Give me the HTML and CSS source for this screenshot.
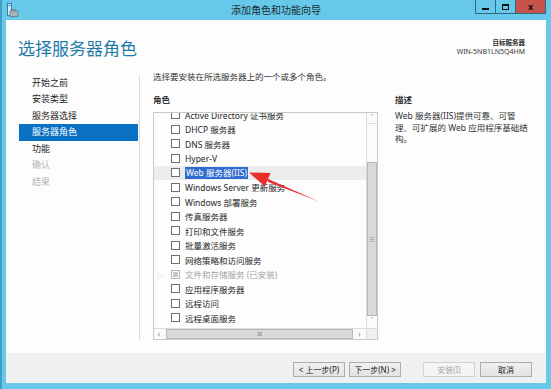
FILE: index.html
```html
<!DOCTYPE html>
<html lang="zh-CN">
<head>
<meta charset="UTF-8">
<title>添加角色和功能向导</title>
<link rel="stylesheet" href="styles.css">
</head>
<body>
    <div class="window">
        <div class="titlebar">
            <svg class="app-icon" width="12" height="14" viewBox="0 0 12 14">
                <rect x="0.5" y="0.5" width="4" height="12" fill="#cfe9f5" stroke="#2f7fb0"/>
                <rect x="1.5" y="2" width="2" height="1" fill="#2f7fb0"/>
                <path d="M3 8 h8 v5.5 h-8 z" fill="#a9b4bb" stroke="#6d7b84" stroke-width="0.8"/>
                <path d="M5.5 8 v-1.5 h3 v1.5" fill="none" stroke="#6d7b84" stroke-width="0.8"/>
            </svg>
            <div class="title">添加角色和功能向导</div>
            <div class="win-buttons">
                <div class="wbtn wbtn-min"><span></span></div>
                <div class="wbtn wbtn-max"><span></span></div>
                <div class="wbtn wbtn-close">x</div>
            </div>
        </div>

        <div class="client">
            <div class="header">
                <h1>选择服务器角色</h1>
                <div class="target">
                    <div class="target-label">目标服务器</div>
                    <div>WIN-5NB1LN5Q4HM</div>
                </div>
            </div>

            <div class="body">
                <ul class="nav">
                    <li>开始之前</li>
                    <li>安装类型</li>
                    <li>服务器选择</li>
                    <li class="active">服务器角色</li>
                    <li>功能</li>
                    <li class="disabled">确认</li>
                    <li class="disabled">结果</li>
                </ul>

                <div class="main">
                    <p class="intro">选择要安装在所选服务器上的一个或多个角色。</p>
                    <div class="cols">
                        <div class="roles">
                            <div class="label">角色</div>
                            <div class="listbox">
                                <div class="list">
                                    <div class="rows">
                                        <div class="row"><span class="exp"></span><span class="chk"></span>Active Directory 证书服务</div>
                                        <div class="row"><span class="exp"></span><span class="chk"></span>DHCP 服务器</div>
                                        <div class="row"><span class="exp"></span><span class="chk"></span>DNS 服务器</div>
                                        <div class="row"><span class="exp"></span><span class="chk"></span>Hyper-V</div>
                                        <div class="row row-current"><span class="exp"></span><span class="chk"></span><span class="sel">Web 服务器(IIS)</span></div>
                                        <div class="row"><span class="exp"></span><span class="chk"></span>Windows Server 更新服务</div>
                                        <div class="row"><span class="exp"></span><span class="chk"></span>Windows 部署服务</div>
                                        <div class="row"><span class="exp"></span><span class="chk"></span>传真服务器</div>
                                        <div class="row"><span class="exp"></span><span class="chk"></span>打印和文件服务</div>
                                        <div class="row"><span class="exp"></span><span class="chk"></span>批量激活服务</div>
                                        <div class="row"><span class="exp"></span><span class="chk"></span>网络策略和访问服务</div>
                                        <div class="row row-installed"><span class="exp">&#9655;</span><span class="chk"><i></i></span>文件和存储服务 (已安装)</div>
                                        <div class="row"><span class="exp"></span><span class="chk"></span>应用程序服务器</div>
                                        <div class="row"><span class="exp"></span><span class="chk"></span>远程访问</div>
                                        <div class="row"><span class="exp"></span><span class="chk"></span>远程桌面服务</div>
                                    </div>
                                </div>
                                <div class="vscroll">
                                    <div class="sb-btn sb-up">&#708;</div>
                                    <div class="sb-space"></div>
                                    <div class="vthumb"><span class="grip">&#8801;</span></div>
                                    <div class="sb-btn sb-down">&#709;</div>
                                </div>
                                <div class="hscroll">
                                    <div class="sb-btn sb-left">&#8249;</div>
                                    <div class="hthumb"><span class="grip">III</span></div>
                                    <div class="sb-btn sb-right">&#8250;</div>
                                </div>
                                <div class="corner"></div>
                            </div>
                        </div>
                        <div class="desc">
                            <div class="label">描述</div>
                            <p>Web 服务器(IIS)提供可靠、可管<br>理、可扩展的 Web 应用程序基础结<br>构。</p>
                        </div>
                    </div>
                </div>
            </div>

            <div class="footer">
                <button class="btn">&lt; 上一步(P)</button>
                <button class="btn">下一步(N) &gt;</button>
                <button class="btn btn-install" disabled>安装(I)</button>
                <button class="btn btn-cancel">取消</button>
            </div>
        </div>

        <!-- 标注箭头 -->
        <svg class="arrow" width="551" height="389" viewBox="0 0 551 389">
            <polygon points="249,172.5 270.5,173 265,186.5" fill="#e8302a"/>
            <polygon points="266.5,178.2 268.2,182 319,201.5" fill="#e8302a"/>
        </svg>
    </div>
</body>
</html>
```

FILE: styles.css
```css
body {
    margin: 0;
    padding: 0;
    font-family: "Noto Sans", "Noto Sans CJK SC", sans-serif;
    color: #1e1e1e;
}
.window {
    position: relative;
    width: 551px;
    height: 389px;
    box-sizing: border-box;
    padding: 0 5px 6px 4px;
    background-color: #66c9e9;
    border-left: 2px solid #3f9fc4;
    display: flex;
    flex-direction: column;
}
.titlebar {
    height: 20px;
    display: grid;
    grid-template-columns: 1fr auto 1fr;
}
.app-icon {
    margin: 3px 0 0 1px;
}
.title {
    font-size: 10px;
    line-height: 20px;
    color: #1d2a30;
}
.win-buttons {
    justify-self: end;
    display: flex;
    height: 14px;
    border: 1px solid #2e6a80;
    border-top: none;
    box-sizing: border-box;
}
.wbtn {
    width: 19px;
    display: flex;
    align-items: center;
    justify-content: center;
    border-right: 1px solid #2e6a80;
}
.wbtn-min span {
    width: 7px;
    height: 2px;
    margin-top: 4px;
    background: #111;
}
.wbtn-max span {
    width: 5px;
    height: 3px;
    border: 1px solid #111;
    border-top-width: 2px;
}
.wbtn-close {
    width: 29px;
    border-right: none;
    background-color: #c6534c;
    color: #111;
    font-size: 9px;
    font-weight: bold;
    line-height: 12px;
}

.client {
    flex: 1;
    background-color: #fdfdfd;
    display: flex;
    flex-direction: column;
}
.header {
    height: 50px;
    display: flex;
    justify-content: space-between;
    box-sizing: border-box;
    padding: 0 21px 0 12px;
}
.header h1 {
    margin: 19px 0 0 0;
    font-size: 17px;
    line-height: 20px;
    font-weight: normal;
    color: #1f7ca9;
}
.target {
    margin-top: 18px;
    text-align: right;
    font-size: 7px;
    line-height: 9px;
    color: #333;
}
.target-label {
    font-size: 6.5px;
    font-weight: bold;
}

.body {
    height: 283px;
    display: flex;
}
.nav {
    list-style: none;
    width: 119px;
    margin: 4.5px 0 13px 0;
    padding: 0 1px 0 13px;
    border-right: 1px solid #d9d9d9;
}
.nav li {
    height: 16.5px;
    line-height: 16.5px;
    padding-left: 13px;
    font-size: 9px;
}
.nav li.active {
    background-color: #0b72c3;
    color: #fff;
}
.nav li.disabled {
    color: #b4b4b4;
}

.main {
    padding-left: 13px;
    font-size: 8.5px;
}
.intro {
    margin: 1px 0 0 0;
    font-size: 8.5px;
    line-height: 12px;
    color: #333;
}
.cols {
    display: flex;
    gap: 17px;
    margin-top: 11px;
}
.label {
    font-weight: bold;
    line-height: 12px;
    font-size: 8.5px;
    color: #333;
}
.listbox {
    margin-top: 6px;
    width: 225px;
    height: 228px;
    box-sizing: border-box;
    border: 1px solid #c9c9c9;
    display: grid;
    grid-template-columns: 1fr 11px;
    grid-template-rows: 1fr 11px;
}
.list {
    overflow: hidden;
}
.rows {
    margin-top: -5.5px;
}
.row {
    height: 14.5px;
    display: flex;
    align-items: center;
    white-space: nowrap;
    color: #262626;
}
.exp {
    width: 17px;
    font-size: 6px;
    color: #bdbdbd;
    padding-left: 3px;
    box-sizing: border-box;
}
.chk {
    width: 9px;
    height: 9px;
    box-sizing: border-box;
    border: 1px solid #6f6f6f;
    background: #fff;
    margin-right: 5px;
    display: flex;
    align-items: center;
    justify-content: center;
}
.row-current {
    background-color: #ececec;
}
.sel {
    background-color: #2f6ccd;
    color: #fff;
    padding: 0 1px;
    line-height: 12px;
}
.row-installed {
    color: #a3a3a3;
}
.row-installed .chk {
    border-color: #b5b5b5;
}
.row-installed .chk i {
    width: 5px;
    height: 5px;
    background: #c8c8c8;
}

.vscroll {
    border-left: 1px solid #dcdcdc;
    background: #fbfbfb;
    display: flex;
    flex-direction: column;
}
.sb-btn {
    color: #8a8a8a;
    font-size: 8px;
    text-align: center;
    line-height: 10px;
}
.sb-up {
    height: 10px;
    border-bottom: 1px solid #dcdcdc;
}
.sb-space {
    height: 38px;
}
.vthumb {
    height: 154px;
    box-sizing: border-box;
    border: 1px solid #b9b9b9;
    background-color: #d9d9d9;
    display: flex;
    align-items: center;
    justify-content: center;
}
.grip {
    color: #8a8a8a;
    font-size: 7px;
    line-height: 7px;
}
.sb-down {
    flex: 1;
}
.hscroll {
    border-top: 1px solid #dcdcdc;
    background: #fbfbfb;
    display: flex;
}
.sb-left {
    width: 10px;
    font-size: 9px;
}
.hthumb {
    width: 187px;
    margin-left: 2px;
    box-sizing: border-box;
    border: 1px solid #b9b9b9;
    background-color: #d9d9d9;
    display: flex;
    align-items: center;
    justify-content: center;
}
.hthumb .grip {
    font-size: 6px;
    letter-spacing: -0.5px;
}
.sb-right {
    flex: 1;
    font-size: 9px;
}
.corner {
    background: #f0f0f0;
    border-top: 1px solid #dcdcdc;
    border-left: 1px solid #dcdcdc;
}

.desc {
    width: 140px;
}
.desc p {
    margin: 4px 0 0 0;
    font-size: 8.5px;
    line-height: 11.7px;
    color: #333;
}

.footer {
    flex: 1;
    background-color: #f0f0f0;
    display: flex;
    justify-content: flex-end;
    align-items: flex-start;
    padding: 9px 14px 0 0;
}
.btn {
    width: 52px;
    height: 15px;
    margin: 0 0 0 4px;
    padding: 0;
    font-family: "Noto Sans", "Noto Sans CJK SC", sans-serif;
    font-size: 8px;
    color: #222;
    border: 1px solid #acacac;
    background: linear-gradient(#f0f0f0, #e3e3e3);
}
.btn-install {
    margin-left: 22px;
    color: #a8a8a8;
    border-color: #d2d2d2;
    background: #f4f4f4;
}
.btn-cancel {
    margin-left: 5px;
}

.arrow {
    position: absolute;
    left: -2px;
    top: 0;
    pointer-events: none;
}
```
